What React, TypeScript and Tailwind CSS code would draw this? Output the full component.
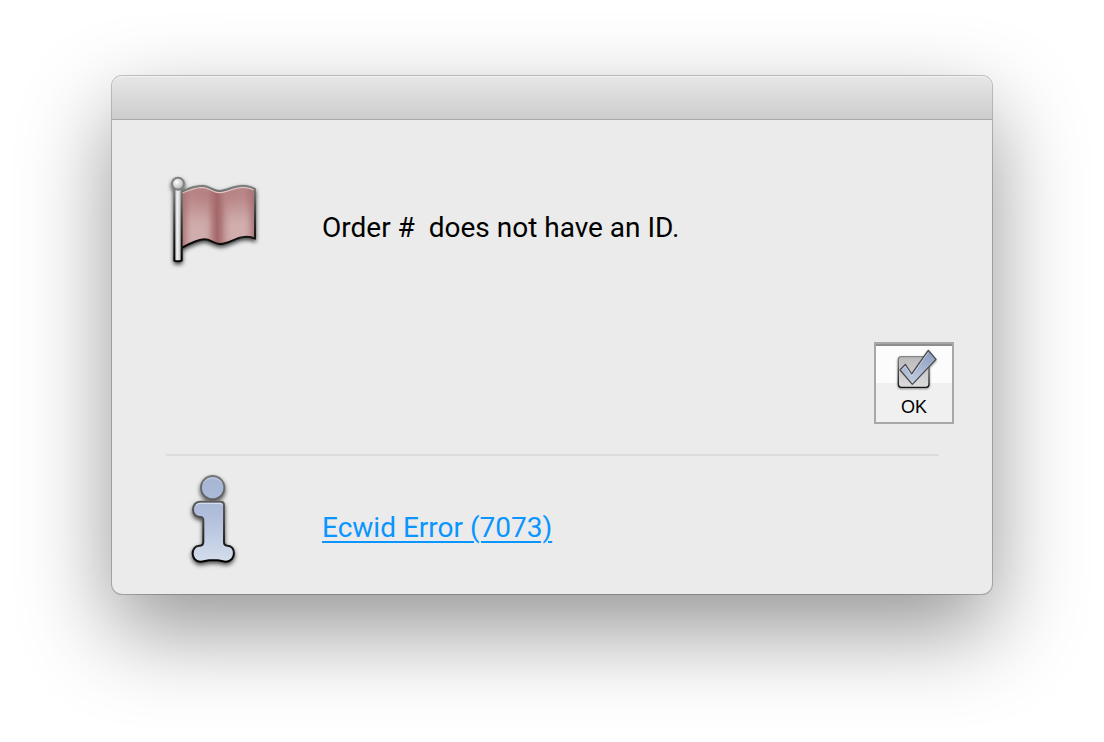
const FlagIcon = () => (
  <svg viewBox="18 15 288 288" className="h-24 w-24 shrink-0 overflow-visible" aria-hidden="true">
    <defs>
      <linearGradient id="flag-folds" x1="0" x2="1" y1="0" y2="0">
        <stop offset="0" stopColor="#a87072" />
        <stop offset="0.14" stopColor="#b98687" />
        <stop offset="0.36" stopColor="#b68182" />
        <stop offset="0.49" stopColor="#a36769" />
        <stop offset="0.6" stopColor="#b78384" />
        <stop offset="0.85" stopColor="#b98788" />
        <stop offset="1" stopColor="#a87072" />
      </linearGradient>
      <linearGradient id="flag-glow-y" x1="0" x2="0" y1="0" y2="1">
        <stop offset="0.1" stopColor="#e2c8c8" stopOpacity="0" />
        <stop offset="0.6" stopColor="#e2c8c8" stopOpacity="0.6" />
        <stop offset="1" stopColor="#e2c8c8" stopOpacity="0.6" />
      </linearGradient>
      <filter id="flag-soften" x="-30%" y="-30%" width="160%" height="160%">
        <feGaussianBlur stdDeviation="9" />
      </filter>
      <clipPath id="flag-cloth">
        <path d="M62 81C85 70 108 62 128 62C150 63 156 77 178 78C202 77 220 62 248 62C264 62 276 66 285 72V221C274 215 264 214 250 216C224 219 208 237 180 237C160 236 152 222 132 223C108 225 88 236 62 250Z" />
      </clipPath>
      <linearGradient id="flag-edge" x1="0" x2="0" y1="0" y2="1">
        <stop offset="0" stopColor="#7c807f" />
        <stop offset="0.45" stopColor="#3c3c3c" />
        <stop offset="1" stopColor="#000" />
      </linearGradient>
      <linearGradient id="flag-pole" x1="0" x2="1" y1="0" y2="0">
        <stop offset="0" stopColor="#a9a9a9" />
        <stop offset="0.4" stopColor="#f2f2f2" />
        <stop offset="1" stopColor="#b4b4b4" />
      </linearGradient>
      <radialGradient id="flag-ball" cx="0.4" cy="0.38" r="0.6">
        <stop offset="0" stopColor="#fff" />
        <stop offset="1" stopColor="#b4b4b4" />
      </radialGradient>
      <filter id="flag-shadow" x="-20%" y="-20%" width="140%" height="150%">
        <feDropShadow dx="0" dy="7" stdDeviation="6" floodColor="#000" floodOpacity="0.75" />
      </filter>
    </defs>
    <g filter="url(#flag-shadow)" strokeLinejoin="round">
      <path
        d="M62 81C85 70 108 62 128 62C150 63 156 77 178 78C202 77 220 62 248 62C264 62 276 66 285 72V221C274 215 264 214 250 216C224 219 208 237 180 237C160 236 152 222 132 223C108 225 88 236 62 250Z"
        fill="url(#flag-folds)"
      />
      <g clipPath="url(#flag-cloth)">
        <rect x="80" y="78" width="72" height="170" fill="url(#flag-glow-y)" filter="url(#flag-soften)" />
        <rect x="196" y="78" width="76" height="160" fill="url(#flag-glow-y)" filter="url(#flag-soften)" />
      </g>
      <path d="M66 84C88 74 108 67 128 67C148 68 156 82 178 83C202 82 222 67 248 67C262 67 273 70 281 75" fill="none" stroke="#dcc4c4" strokeWidth="4" />
      <path
        d="M62 81C85 70 108 62 128 62C150 63 156 77 178 78C202 77 220 62 248 62C264 62 276 66 285 72V221C274 215 264 214 250 216C224 219 208 237 180 237C160 236 152 222 132 223C108 225 88 236 62 250Z"
        fill="none"
        stroke="url(#flag-edge)"
        strokeWidth="6"
      />
      <path d="M43 68H65V287Q54 291 43 287Z" fill="url(#flag-pole)" stroke="url(#flag-edge)" strokeWidth="6" />
      <circle cx="54" cy="56" r="18" fill="url(#flag-ball)" stroke="#7c807f" strokeWidth="6" />
    </g>
  </svg>
);

const InfoIcon = () => (
  <svg viewBox="-42 21 288 288" className="h-24 w-24 shrink-0 overflow-visible" aria-hidden="true">
    <defs>
      <linearGradient id="info-fill" gradientUnits="userSpaceOnUse" x1="0" x2="0" y1="34" y2="290">
        <stop offset="0" stopColor="#a5b5d3" />
        <stop offset="0.45" stopColor="#b0bedb" />
        <stop offset="1" stopColor="#d3ddec" />
      </linearGradient>
      <linearGradient id="info-edge" gradientUnits="userSpaceOnUse" x1="0" x2="0" y1="34" y2="290">
        <stop offset="0" stopColor="#757575" />
        <stop offset="0.5" stopColor="#4a4a4a" />
        <stop offset="1" stopColor="#000" />
      </linearGradient>
      <filter id="info-shadow" x="-25%" y="-10%" width="150%" height="130%">
        <feDropShadow dx="0" dy="7" stdDeviation="6" floodColor="#000" floodOpacity="0.7" />
      </filter>
    </defs>
    <g filter="url(#info-shadow)" fill="url(#info-fill)" stroke="url(#info-edge)" strokeWidth="6" strokeLinejoin="round">
      <circle cx="98" cy="68" r="35" />
      <path d="M60 110H122Q132 110 132 120V232Q132 242 142 242C170 242 168 290 138 290C128 290 122 286 112 286H88C78 286 72 290 60 290C32 290 30 243 58 242Q70 242 70 230V166Q70 156 60 156C32 156 32 111 60 110Z" />
    </g>
    <path d="M49 120Q54 115 62 115H120Q126 115 127 121" fill="none" stroke="#dfe5f0" strokeWidth="3" />
    <path d="M70 54Q80 39 98 39Q116 39 126 54" fill="none" stroke="#cfd8e8" strokeWidth="2" />
  </svg>
);

const CheckIcon = () => (
  <svg viewBox="75 39 144 135" className="h-[45px] w-12 overflow-visible" aria-hidden="true">
    <defs>
      <linearGradient id="check-box" x1="0" x2="0" y1="0" y2="1">
        <stop offset="0" stopColor="#b9b9b9" />
        <stop offset="1" stopColor="#dcdcdc" />
      </linearGradient>
      <linearGradient id="check-edge" x1="0" x2="0" y1="0" y2="1">
        <stop offset="0" stopColor="#858585" />
        <stop offset="1" stopColor="#151515" />
      </linearGradient>
      <linearGradient id="check-tick" x1="0" x2="0" y1="0" y2="1">
        <stop offset="0" stopColor="#8799bd" />
        <stop offset="1" stopColor="#c5d0e4" />
      </linearGradient>
      <filter id="check-shadow" x="-20%" y="-20%" width="140%" height="150%">
        <feDropShadow dx="0" dy="3" stdDeviation="3" floodColor="#000" floodOpacity="0.45" />
      </filter>
    </defs>
    <g filter="url(#check-shadow)" strokeLinejoin="round">
      <rect x="100" y="65" width="92" height="92" rx="9" fill="url(#check-box)" stroke="url(#check-edge)" strokeWidth="4" />
      <path d="M105 105L121 88L140 117L190 46L213 73L142 148Z" fill="url(#check-tick)" stroke="#4b4b4b" strokeWidth="4" />
      <path d="M110 105L121 94L140 123L190 52" fill="none" stroke="#dbe2ee" strokeWidth="2" />
    </g>
  </svg>
);

const App = () => {
  return (
    <main className="min-h-screen overflow-hidden bg-white px-28 pt-[76px] pb-[148px] font-[Roboto,'Liberation_Sans',sans-serif]">
      <div
        role="dialog"
        aria-labelledby="dialog-message"
        className="rounded-[10px] bg-[#ebebeb] shadow-[0_0_0_1px_rgba(0,0,0,0.22),0_36px_90px_rgba(0,0,0,0.42)]"
      >
        <header className="h-11 rounded-t-[10px] border-t border-b border-t-[#f3f3f3] border-b-[#a9a9a9] bg-linear-to-b from-[#e6e6e6] to-[#cdcdcd]" />

        <div className="pt-[50px] pr-[38px] pb-[26px] pl-[54px]">
          <div className="flex items-center gap-[60px]">
            <FlagIcon />
            <p id="dialog-message" className="pt-5 whitespace-pre text-[28px] leading-9 text-black">
              Order #  does not have an ID.
            </p>
          </div>

          <div className="mt-[76px] flex justify-end">
            <button
              type="button"
              className="flex h-[82px] w-20 flex-col items-center border-2 border-[#a8a8a8] bg-linear-to-b from-[#fcfcfc] from-50% to-[#f0f0f0] to-50% pt-1 shadow-[inset_0_2px_0_#8e8e8e]"
            >
              <CheckIcon />
              <span className="font-['Liberation_Sans',sans-serif] text-lg leading-7 text-black">OK</span>
            </button>
          </div>

          <hr className="mt-[30px] mr-[15px] border-t-2 border-[#dcdcdc]" />

          <div className="mt-4 flex items-center gap-[60px]">
            <InfoIcon />
            <a
              href="#"
              className="pt-4 text-[28px] leading-9 text-[#0a95ff] underline decoration-2 underline-offset-4"
            >
              Ecwid Error (7073)
            </a>
          </div>
        </div>
      </div>
    </main>
  );
};

export default App;
